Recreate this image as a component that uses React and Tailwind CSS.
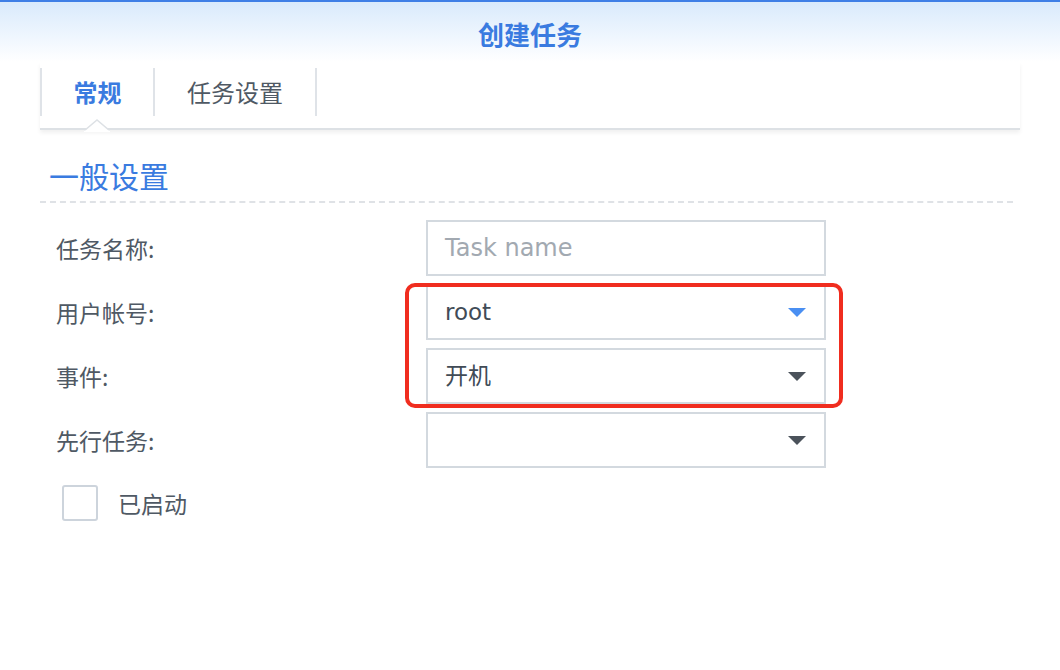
import React from 'react';

const font = { fontFamily: '"Noto Sans CJK SC", "Noto Sans", sans-serif' };
const latin = { fontFamily: '"DejaVu Sans", "Noto Sans CJK SC", sans-serif' };

const Caret = ({ active }) => (
  <svg width="18" height="9" viewBox="0 0 18 9" className="shrink-0">
    <path d="M0 0 L18 0 L9 9 Z" fill={active ? '#4a8ff2' : '#4b525b'} />
  </svg>
);

const Row = ({ label, children }) => (
  <div className="flex items-center">
    <div className="w-[386px] pl-4 text-[23px] text-[#4f5964]">{label}</div>
    {children}
  </div>
);

const Select = ({ value, active }) => (
  <div className="w-[400px] h-[56px] border-2 border-[#d3d9df] flex items-center justify-between pl-[17px] pr-[18px]">
    <span className="text-[23px] text-[#414b56]" style={latin}>{value}</span>
    <Caret active={active} />
  </div>
);

export default function App() {
  return (
    <div className="w-[1060px] h-[670px] bg-white overflow-hidden" style={font}>
      {/* header */}
      <div className="border-t-2 border-[#3f7fe6] h-[62px] bg-gradient-to-b from-[#d9eafc] to-white flex items-center justify-center">
        <h1 className="text-[26px] font-bold text-[#3a7be0] mt-[2px]">创建任务</h1>
      </div>

      {/* tabs */}
      <div className="mx-[40px] relative">
        <div className="flex pt-[6px] h-[68px] border-b-2 border-[#dde1e5] shadow-[0_3px_4px_rgba(0,0,0,0.06)]">
          <div className="w-[115px] h-[48px] border-l-2 border-r-2 border-[#dfe3e8] flex items-center justify-center text-[24px] font-bold text-[#3a7be0]">常规</div>
          <div className="w-[162px] h-[48px] border-r-2 border-[#dfe3e8] flex items-center justify-center text-[24px] text-[#4f5964]">任务设置</div>
        </div>
        <svg width="26" height="13" viewBox="0 0 26 13" className="absolute left-[44px] top-[57px]">
          <path d="M0 12 L13 1 L26 12" fill="white" stroke="#dde1e5" strokeWidth="1.5" />
          <rect x="0" y="11.5" width="26" height="2" fill="white" />
        </svg>
      </div>

      {/* section */}
      <div className="mx-[40px]">
        <h2 className="text-[30px] text-[#3a7be0] pl-[9px] mt-[24px] leading-[42px]">一般设置</h2>
        <div className="mr-[7px] mt-[5px] border-b-2 border-dashed border-[#dfe2e6]" />

        <div className="flex flex-col gap-[8px] mt-[17px]">
          <Row label="任务名称:">
            <div className="w-[400px] h-[56px] border-2 border-[#d3d9df] flex items-center pl-[17px]">
              <span className="text-[24px] text-[#a2a9b1]" style={latin}>Task name</span>
            </div>
          </Row>
          <div className="relative flex flex-col gap-[8px]">
            <Row label="用户帐号:">
              <Select value="root" active />
            </Row>
            <Row label="事件:">
              <Select value="开机" />
            </Row>
            <div className="absolute left-[365px] top-[-1px] w-[438px] h-[125px] border-[4px] border-[#f02d1f] rounded-[10px]" />
          </div>
          <Row label="先行任务:">
            <Select value="" />
          </Row>
        </div>

        <div className="flex items-center mt-[17px] pl-[22px]">
          <div className="w-[36px] h-[36px] border-2 border-[#cdd4dc] rounded-[3px]" />
          <span className="ml-[20px] text-[23px] text-[#4f5964]">已启动</span>
        </div>
      </div>
    </div>
  );
}
